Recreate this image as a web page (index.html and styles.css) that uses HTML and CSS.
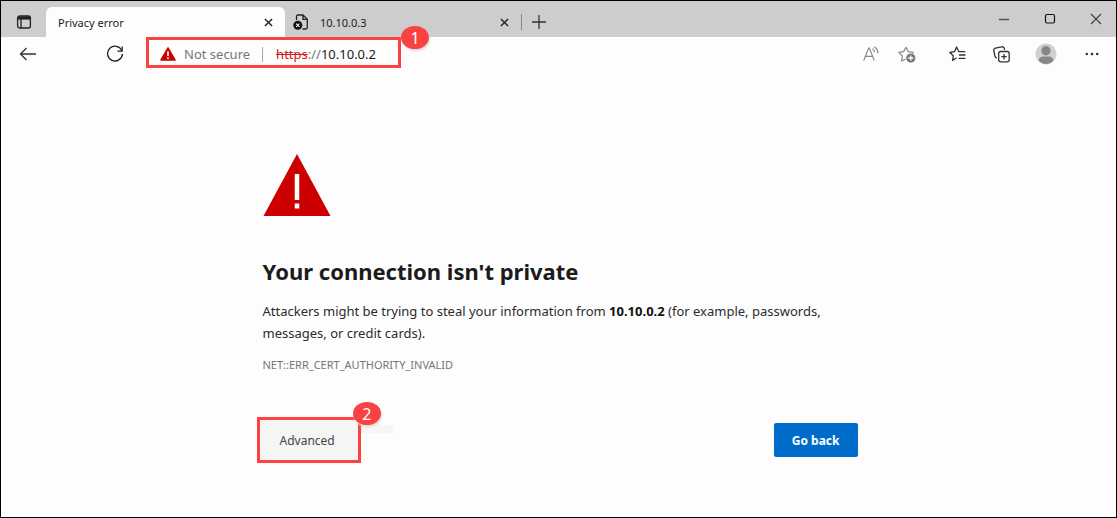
FILE: index.html
```html
<!DOCTYPE html>
<html lang="en">
<head>
<meta charset="utf-8">
<meta name="viewport" content="width=device-width, initial-scale=1">
<title>Privacy error</title>
<link rel="stylesheet" href="styles.css">
</head>
<body>
<div class="window">
  <header class="tab-strip">
    <button class="icon-btn tab-actions" aria-label="Tab actions menu">
      <svg width="16" height="16" viewBox="0 0 16 16" fill="none" stroke="#222" stroke-width="1.3"><rect x="1.6" y="2" width="12.8" height="12" rx="2"/><path d="M5 5v9"/><path d="M2 4h12" stroke-width="3.2"/></svg>
    </button>
    <div class="tab tab-active">
      <span class="tab-title">Privacy error</span>
      <button class="icon-btn tab-close" aria-label="Close tab"><svg width="9" height="9" viewBox="0 0 10 10" stroke="#222" stroke-width="1.6"><path d="M1 1l8 8M9 1L1 9"/></svg></button>
    </div>
    <div class="tab">
      <svg class="tab-icon" width="16" height="17" viewBox="0 0 16 17" fill="none" stroke="#222" stroke-width="1.3"><path d="M3.5 6V2.5q0-1.5 1.5-1.5h5l4.3 4.3v8.200q0 1.500-1.500 1.500H9.500M10 1v4.300h4.300"/><circle cx="4.800" cy="11.200" r="4.500" fill="#111" stroke="none"/><path d="M3.200 9.600l3.200 3.200M6.400 9.600l-3.200 3.200" stroke="#eee" stroke-width="1.200"/></svg>
      <span class="tab-title">10.10.0.3</span>
      <button class="icon-btn tab-close" aria-label="Close tab"><svg width="9" height="9" viewBox="0 0 10 10" stroke="#222" stroke-width="1.6"><path d="M1 1l8 8M9 1L1 9"/></svg></button>
    </div>
    <button class="icon-btn new-tab" aria-label="New tab"><svg width="14" height="14" viewBox="0 0 14 14" stroke="#333" stroke-width="1.300"><path d="M7 0v14M0 7h14"/></svg></button>
    <div class="window-controls">
      <button class="icon-btn" aria-label="Minimize"><svg width="12" height="12" viewBox="0 0 12 12" stroke="#555" stroke-width="1.500"><path d="M1 6.500h10"/></svg></button>
      <button class="icon-btn" aria-label="Maximize"><svg width="12" height="12" viewBox="0 0 12 12" fill="none" stroke="#111" stroke-width="1.200"><rect x="1.500" y="1.500" width="9" height="8.500" rx="1.500"/></svg></button>
      <button class="icon-btn" aria-label="Close"><svg width="12" height="12" viewBox="0 0 12 12" stroke="#444" stroke-width="1.200"><path d="M1 1l10 10M11 1L1 11"/></svg></button>
    </div>
  </header>

  <nav class="toolbar" aria-label="Browser toolbar">
    <div class="nav-buttons">
      <button class="icon-btn" aria-label="Back"><svg width="18" height="14" viewBox="0 0 18 14" fill="none" stroke="#333" stroke-width="1.300"><path d="M17 7H1.500M7.500 1l-6 6 6 6"/></svg></button>
      <button class="icon-btn" aria-label="Refresh"><svg width="18" height="18" viewBox="0 0 18 18" fill="none" stroke="#222" stroke-width="1.300"><path d="M15.800 5.600A7.400 7.400 0 1 0 16.400 9"/><path d="M16.200 1.500v4.700h-4.700"/></svg></button>
    </div>
    <div class="address callout">
      <button class="site-info">
        <svg width="16" height="14" viewBox="0 0 16 14"><path d="M8 1L15 13H1z" fill="#c80404" stroke="#c80404" stroke-width="1.500" stroke-linejoin="round"/><path d="M8 4.500v4.500M8 10.300v1.800" stroke="#fff" stroke-width="1.600"/></svg>
        <span>Not secure</span>
      </button>
      <div class="url" role="textbox" tabindex="0" aria-label="Address"><s>https</s><span class="slashes">://</span>10.10.0.2</div>
      <span class="badge badge-one">1</span>
    </div>
    <div class="tools">
      <button class="icon-btn" aria-label="Read aloud"><svg width="16" height="16" viewBox="0 0 16 16" fill="none" stroke="#8a8a8a" stroke-width="1.200"><path d="M.7 14.500L5.700 2h.6l5 12.500M2.500 10.300h7M9.500 2.700q1.800 1.300 2 3.600M11.500 .8q3.300 2.500 3.500 6.300"/></svg></button>
      <button class="icon-btn" aria-label="Add to favorites"><svg width="18" height="17" viewBox="0 0 18 17" fill="none" stroke="#888" stroke-width="1.200" stroke-linejoin="round"><path d="M7.500 13l-3.900 2 .8-5L.8 6.400l4.700-.7L8 1.200l2.300 4.500 5 .7-1 1"/><circle cx="12.800" cy="12" r="4.600" fill="#777" stroke="none"/><path d="M12.800 9.500v5M10.300 12h5" stroke="#fff" stroke-width="1.300"/></svg></button>
      <button class="icon-btn" aria-label="Favorites"><svg width="17" height="16" viewBox="0 0 17 16" fill="none" stroke="#333" stroke-width="1.300" stroke-linejoin="round"><path d="M7.500 11.800l-3.900 2.700.7-4.700L.8 6.500l4.700-.8L7.600 1l2.200 4.700h6.500M10 9h6.500M9.500 12.300h7"/></svg></button>
      <button class="icon-btn" aria-label="Collections"><svg width="17" height="17" viewBox="0 0 17 17" fill="none" stroke="#333" stroke-width="1.300"><rect x="5.700" y="5.500" width="10.500" height="10.300" rx="2"/><path d="M11 8v5.400M8.300 10.700h5.400M3.700 12.200Q2.300 11.600 1.900 10L.8 4.600q-.3-2 1.600-2.500l6.200-1.300q2-.3 2.600 1.500l.5 1.400"/></svg></button>
      <button class="icon-btn" aria-label="Profile"><svg width="22" height="22" viewBox="0 0 22 22"><circle cx="11" cy="11" r="10.500" fill="#d2d0ce"/><circle cx="11" cy="7.800" r="4.700" fill="#898785"/><path d="M3.500 17.200q1.300-3.700 4.500-3.700h6q3.200 0 4.500 3.700-3 3.800-7.500 3.800t-7.500-3.800z" fill="#898785"/></svg></button>
      <button class="icon-btn" aria-label="Settings and more"><svg width="14" height="4" viewBox="0 0 14 4" fill="#333"><circle cx="1.800" cy="2" r="1.300"/><circle cx="7" cy="2" r="1.300"/><circle cx="12.200" cy="2" r="1.300"/></svg></button>
    </div>
  </nav>

  <main class="page">
    <svg class="warning" width="68" height="62" viewBox="0 0 68 62" role="img" aria-label="Warning"><path d="M34 0l33.500 62H.5z" fill="#c00"/><path d="M34 20v26M34 49.500v5" stroke="#fff" stroke-width="4.500"/></svg>
    <h1>Your connection isn't private</h1>
    <p class="message">Attackers might be trying to steal your information from <strong>10.10.0.2</strong> (for example, passwords, messages, or credit cards).</p>
    <p class="code">NET::ERR_CERT_AUTHORITY_INVALID</p>
    <div class="actions">
      <div class="advanced callout">
        <button class="btn btn-light">Advanced</button>
        <span class="badge badge-two">2</span>
      </div>
      <button class="btn btn-primary">Go back</button>
    </div>
  </main>
</div>
</body>
</html>
```
FILE: styles.css
```css
* { box-sizing: border-box; }

body {
  margin: 0;
  font-family: "Noto Sans", "Open Sans", sans-serif;
  color: #1b1b1b;
  background: #fdfdfd;
}

button {
  margin: 0;
  padding: 0;
  border: 0;
  background: none;
  font: inherit;
  color: inherit;
}

svg { display: block; flex: none; }

.window {
  min-height: 100vh;
  border: 1px solid #000;
}

.icon-btn {
  display: flex;
  align-items: center;
  justify-content: center;
  flex: none;
}

/* Tab strip */
.tab-strip {
  display: flex;
  align-items: flex-end;
  height: 36px;
  background: #cdcdcd;
  font-size: 11px;
}

.tab-actions { width: 45px; height: 30px; }

.tab {
  display: flex;
  align-items: center;
  flex: 0 1 236px;
  height: 30px;
  padding: 0 12px 0 8px;
}

.tab-active {
  flex-basis: 239px;
  padding-left: 12px;
  background: #fdfdfd;
  border-radius: 6px 6px 0 0;
}

.tab-icon { margin-right: 11px; }
.tab-title { flex: 1; }

.new-tab {
  height: 16px;
  margin-bottom: 7px;
  padding-left: 10px;
  border-left: 1px solid #888;
}

.window-controls {
  display: flex;
  align-self: flex-start;
  gap: 34px;
  height: 36px;
  margin-left: auto;
  padding-right: 14px;
}

/* Toolbar */
.toolbar {
  display: flex;
  align-items: center;
  height: 34px;
  padding: 0 17px 0 18px;
}

.nav-buttons { display: flex; gap: 69px; }

.callout {
  position: relative;
  border: 3px solid #fb4242;
}

.address {
  display: flex;
  align-items: center;
  align-self: flex-start;
  width: 255px;
  height: 31px;
  margin-left: 22px;
  padding: 3px 0 0 11px;
  font-size: 13px;
}

.site-info {
  display: flex;
  align-items: center;
  gap: 8px;
  color: #767676;
}

.url {
  margin-left: 12px;
  padding-left: 13px;
  border-left: 1px solid #aaa;
  line-height: 15px;
}

.url s { color: #d02020; }
.slashes { color: #767676; }

.badge {
  position: absolute;
  display: flex;
  align-items: center;
  justify-content: center;
  width: 28px;
  height: 23px;
  border-radius: 50%;
  background: #fb4242;
  box-shadow: 1px 2px 2px #ddd;
  color: #fff;
  font-size: 16px;
}

.badge-one { top: -14px; right: -31px; }
.badge-two { top: -18px; right: -23px; }

.tools {
  display: grid;
  grid-template-columns: 28px 44px 56px 32px 58px 33px;
  margin-left: auto;
  margin-right: -9px;
}

/* Error page */
.page {
  max-width: 596px;
  margin: 0 auto;
  padding: 83px 0 48px 2px;
}

h1 {
  margin: 39px 0 0;
  font-size: 22px;
  line-height: 32px;
}

.message {
  margin: 13px 0 0;
  color: #2b2b2b;
  font-size: 13px;
  line-height: 22px;
}

.message strong { color: #111; }

.code {
  margin: 12px 0 0;
  color: #767676;
  font-size: 11px;
  line-height: 18px;
}

.actions {
  display: flex;
  align-items: center;
  justify-content: space-between;
  margin: 43px -1px 0 -6px;
}

.btn { font-size: 12px; }

.advanced::after {
  content: "";
  position: absolute;
  top: 5px;
  right: -35px;
  width: 32px;
  height: 8px;
  background: #f6f6f6;
}

.btn-light {
  height: 40px;
  padding: 0 23px 0 20px;
  background: #f5f5f5;
  color: #444;
}

.btn-primary {
  height: 34px;
  padding: 0 18px;
  border-radius: 2px;
  background: #006cc9;
  color: #fff;
  font-weight: 700;
}

.badge-two { z-index: 1; }
```
